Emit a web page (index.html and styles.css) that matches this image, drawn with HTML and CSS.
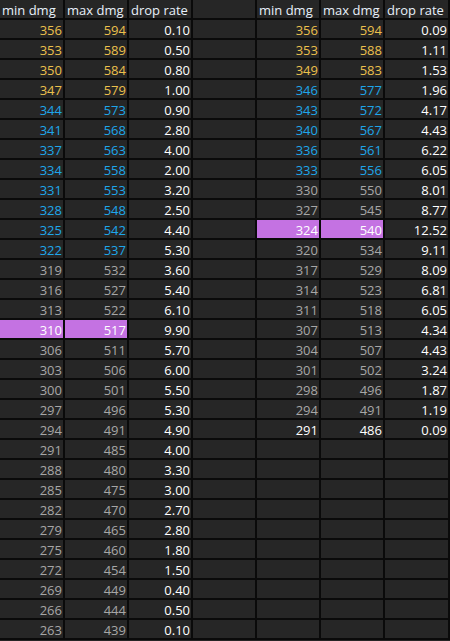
FILE: index.html
```html
<!DOCTYPE html>
<html>
<head>
<meta charset="utf-8">
<link rel="stylesheet" href="styles.css">
</head>
<body>
<div class="sheet">
  <div class="row head"><div class="c">min dmg</div><div class="c">max dmg</div><div class="c">drop rate</div><div class="c"></div><div class="c">min dmg</div><div class="c">max dmg</div><div class="c">drop rate</div></div>
  <div class="row"><div class="c y">356</div><div class="c y">594</div><div class="c w">0.10</div><div class="c"></div><div class="c y">356</div><div class="c y">594</div><div class="c w">0.09</div></div>
  <div class="row"><div class="c y">353</div><div class="c y">589</div><div class="c w">0.50</div><div class="c"></div><div class="c y">353</div><div class="c y">588</div><div class="c w">1.11</div></div>
  <div class="row"><div class="c y">350</div><div class="c y">584</div><div class="c w">0.80</div><div class="c"></div><div class="c y">349</div><div class="c y">583</div><div class="c w">1.53</div></div>
  <div class="row"><div class="c y">347</div><div class="c y">579</div><div class="c w">1.00</div><div class="c"></div><div class="c b">346</div><div class="c b">577</div><div class="c w">1.96</div></div>
  <div class="row"><div class="c b">344</div><div class="c b">573</div><div class="c w">0.90</div><div class="c"></div><div class="c b">343</div><div class="c b">572</div><div class="c w">4.17</div></div>
  <div class="row"><div class="c b">341</div><div class="c b">568</div><div class="c w">2.80</div><div class="c"></div><div class="c b">340</div><div class="c b">567</div><div class="c w">4.43</div></div>
  <div class="row"><div class="c b">337</div><div class="c b">563</div><div class="c w">4.00</div><div class="c"></div><div class="c b">336</div><div class="c b">561</div><div class="c w">6.22</div></div>
  <div class="row"><div class="c b">334</div><div class="c b">558</div><div class="c w">2.00</div><div class="c"></div><div class="c b">333</div><div class="c b">556</div><div class="c w">6.05</div></div>
  <div class="row"><div class="c b">331</div><div class="c b">553</div><div class="c w">3.20</div><div class="c"></div><div class="c g">330</div><div class="c g">550</div><div class="c w">8.01</div></div>
  <div class="row"><div class="c b">328</div><div class="c b">548</div><div class="c w">2.50</div><div class="c"></div><div class="c g">327</div><div class="c g">545</div><div class="c w">8.77</div></div>
  <div class="row"><div class="c b">325</div><div class="c b">542</div><div class="c w">4.40</div><div class="c"></div><div class="c hl">324</div><div class="c hl">540</div><div class="c w">12.52</div></div>
  <div class="row"><div class="c b">322</div><div class="c b">537</div><div class="c w">5.30</div><div class="c"></div><div class="c g">320</div><div class="c g">534</div><div class="c w">9.11</div></div>
  <div class="row"><div class="c g">319</div><div class="c g">532</div><div class="c w">3.60</div><div class="c"></div><div class="c g">317</div><div class="c g">529</div><div class="c w">8.09</div></div>
  <div class="row"><div class="c g">316</div><div class="c g">527</div><div class="c w">5.40</div><div class="c"></div><div class="c g">314</div><div class="c g">523</div><div class="c w">6.81</div></div>
  <div class="row"><div class="c g">313</div><div class="c g">522</div><div class="c w">6.10</div><div class="c"></div><div class="c g">311</div><div class="c g">518</div><div class="c w">6.05</div></div>
  <div class="row"><div class="c hl">310</div><div class="c hl">517</div><div class="c w">9.90</div><div class="c"></div><div class="c g">307</div><div class="c g">513</div><div class="c w">4.34</div></div>
  <div class="row"><div class="c g">306</div><div class="c g">511</div><div class="c w">5.70</div><div class="c"></div><div class="c g">304</div><div class="c g">507</div><div class="c w">4.43</div></div>
  <div class="row"><div class="c g">303</div><div class="c g">506</div><div class="c w">6.00</div><div class="c"></div><div class="c g">301</div><div class="c g">502</div><div class="c w">3.24</div></div>
  <div class="row"><div class="c g">300</div><div class="c g">501</div><div class="c w">5.50</div><div class="c"></div><div class="c g">298</div><div class="c g">496</div><div class="c w">1.87</div></div>
  <div class="row"><div class="c g">297</div><div class="c g">496</div><div class="c w">5.30</div><div class="c"></div><div class="c g">294</div><div class="c g">491</div><div class="c w">1.19</div></div>
  <div class="row"><div class="c g">294</div><div class="c g">491</div><div class="c w">4.90</div><div class="c"></div><div class="c w">291</div><div class="c w">486</div><div class="c w">0.09</div></div>
  <div class="row"><div class="c g">291</div><div class="c g">485</div><div class="c w">4.00</div><div class="c"></div><div class="c"></div><div class="c"></div><div class="c"></div></div>
  <div class="row"><div class="c g">288</div><div class="c g">480</div><div class="c w">3.30</div><div class="c"></div><div class="c"></div><div class="c"></div><div class="c"></div></div>
  <div class="row"><div class="c g">285</div><div class="c g">475</div><div class="c w">3.00</div><div class="c"></div><div class="c"></div><div class="c"></div><div class="c"></div></div>
  <div class="row"><div class="c g">282</div><div class="c g">470</div><div class="c w">2.70</div><div class="c"></div><div class="c"></div><div class="c"></div><div class="c"></div></div>
  <div class="row"><div class="c g">279</div><div class="c g">465</div><div class="c w">2.80</div><div class="c"></div><div class="c"></div><div class="c"></div><div class="c"></div></div>
  <div class="row"><div class="c g">275</div><div class="c g">460</div><div class="c w">1.80</div><div class="c"></div><div class="c"></div><div class="c"></div><div class="c"></div></div>
  <div class="row"><div class="c g">272</div><div class="c g">454</div><div class="c w">1.50</div><div class="c"></div><div class="c"></div><div class="c"></div><div class="c"></div></div>
  <div class="row"><div class="c g">269</div><div class="c g">449</div><div class="c w">0.40</div><div class="c"></div><div class="c"></div><div class="c"></div><div class="c"></div></div>
  <div class="row"><div class="c g">266</div><div class="c g">444</div><div class="c w">0.50</div><div class="c"></div><div class="c"></div><div class="c"></div><div class="c"></div></div>
  <div class="row"><div class="c g">263</div><div class="c g">439</div><div class="c w">0.10</div><div class="c"></div><div class="c"></div><div class="c"></div><div class="c"></div></div>
</div>
</body>
</html>
```
FILE: styles.css
```css
html, body {
  margin: 0;
  padding: 0;
  background: #262626;
}
.sheet {
  display: grid;
  grid-template-columns: 63px repeat(5, 62px) 63px;
  grid-auto-rows: 18px;
  gap: 2px;
  width: 450px;
  padding: 0 2px 2px 0;
  box-sizing: border-box;
  background: #0a0a0a;
  font-family: "Open Sans", "Noto Sans", sans-serif;
  font-size: 13px;
}
.row {
  display: contents;
}
.c {
  background: #262626;
  box-sizing: border-box;
  padding: 1px 1px 0 2px;
  line-height: 18px;
  text-align: right;
  white-space: nowrap;
  overflow: hidden;
  color: #a6a6a6;
}
.head .c {
  text-align: left;
  color: #e8f0fa;
}
.y { color: #ecc04c; }
.b { color: #1ea6ea; }
.g { color: #a6a6a6; }
.w { color: #ffffff; }
.hl {
  background: #c472e2;
  color: #ffffff;
}
```
